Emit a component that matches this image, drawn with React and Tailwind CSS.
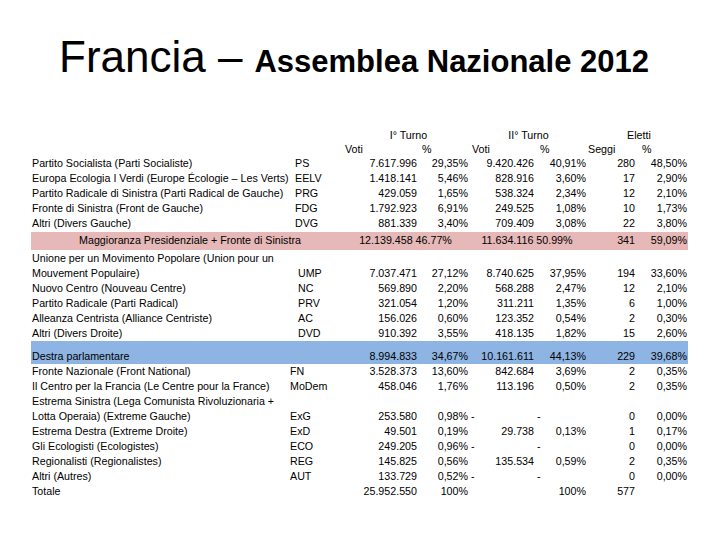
const num = "text-right";

const left = [
  ["Partito Socialista (Parti Socialiste)", "PS", "7.617.996", "29,35%", "9.420.426", "40,91%", "280", "48,50%"],
  ["Europa Ecologia I Verdi (Europe Écologie – Les Verts)", "EELV", "1.418.141", "5,46%", "828.916", "3,60%", "17", "2,90%"],
  ["Partito Radicale di Sinistra (Parti Radical de Gauche)", "PRG", "429.059", "1,65%", "538.324", "2,34%", "12", "2,10%"],
  ["Fronte di Sinistra (Front de Gauche)", "FDG", "1.792.923", "6,91%", "249.525", "1,08%", "10", "1,73%"],
  ["Altri (Divers Gauche)", "DVG", "881.339", "3,40%", "709.409", "3,08%", "22", "3,80%"],
];

const centre = [
  ["Unione per un Movimento Popolare (Union pour un"],
  ["Mouvement Populaire)", "UMP", "7.037.471", "27,12%", "8.740.625", "37,95%", "194", "33,60%"],
  ["Nuovo Centro (Nouveau Centre)", "NC", "569.890", "2,20%", "568.288", "2,47%", "12", "2,10%"],
  ["Partito Radicale (Parti Radical)", "PRV", "321.054", "1,20%", "311.211", "1,35%", "6", "1,00%"],
  ["Alleanza Centrista (Alliance Centriste)", "AC", "156.026", "0,60%", "123.352", "0,54%", "2", "0,30%"],
  ["Altri (Divers Droite)", "DVD", "910.392", "3,55%", "418.135", "1,82%", "15", "2,60%"],
];

const others = [
  ["Fronte Nazionale (Front National)", "FN", "3.528.373", "13,60%", "842.684", "3,69%", "2", "0,35%"],
  ["Il Centro per la Francia (Le Centre pour la France)", "MoDem", "458.046", "1,76%", "113.196", "0,50%", "2", "0,35%"],
  ["Estrema Sinistra (Lega Comunista Rivoluzionaria +"],
  ["Lotta Operaia) (Extreme Gauche)", "ExG", "253.580", "0,98%", "-", "-", "0", "0,00%"],
  ["Estrema Destra (Extreme Droite)", "ExD", "49.501", "0,19%", "29.738", "0,13%", "1", "0,17%"],
  ["Gli Ecologisti (Ecologistes)", "ECO", "249.205", "0,96%", "-", "-", "0", "0,00%"],
  ["Regionalisti (Regionalistes)", "REG", "145.825", "0,56%", "135.534", "0,59%", "2", "0,35%"],
  ["Altri (Autres)", "AUT", "133.729", "0,52%", "-", "-", "0", "0,00%"],
  ["Totale", "", "25.952.550", "100%", "", "100%", "577", ""],
];

function Row({ r, pad, className = "h-[15px]" }) {
  const [label, abbr = "", v1 = "", p1 = "", v2 = "", p2 = "", s = "", p3 = ""] = r;
  return (
    <div className={`flex items-center ${className}`}>
      <div className="w-[259px] pl-[1px] whitespace-nowrap">{label}</div>
      <div className={`w-[53px] ${pad}`}>{abbr}</div>
      <div className={`w-[75px] pr-[1px] ${num}`}>{v1}</div>
      <div className={`w-[50px] ${num}`}>{p1}</div>
      {v2 === "-" ? (
        <div className="w-[66px] pl-[3px]">-</div>
      ) : (
        <div className={`w-[66px] ${num}`}>{v2}</div>
      )}
      {p2 === "-" ? (
        <div className="w-[52px] pl-[3px]">-</div>
      ) : (
        <div className={`w-[52px] ${num}`}>{p2}</div>
      )}
      <div className={`w-[50px] pr-[1px] ${num}`}>{s}</div>
      <div className={`w-[52px] pr-[1px] ${num}`}>{p3}</div>
    </div>
  );
}

export default function App() {
  return (
    <div className="w-[720px] h-[540px] bg-white text-black font-['Liberation_Sans',Arial,sans-serif] overflow-hidden">
      <div className="h-[128px] pt-[35px] pl-[59px] flex items-baseline leading-none">
        <span className="text-[44px]">Francia –</span>
        <span className="text-[31px] font-bold ml-[12px]">Assemblea Nazionale 2012</span>
      </div>

      <div className="ml-[31px] w-[657px] text-[10.7px] leading-[15px]">
        <div className="flex h-[14px] items-center">
          <div className="w-[312px]" />
          <div className="w-[125px] pl-[6px] text-center">I° Turno</div>
          <div className="w-[118px] pl-[3px] text-center">II° Turno</div>
          <div className="w-[102px] pl-[4px] text-center">Eletti</div>
        </div>
        <div className="flex h-[14px] items-center">
          <div className="w-[312px]" />
          <div className="w-[75px] pl-[2px]">Voti</div>
          <div className="w-[50px] pl-[4px]">%</div>
          <div className="w-[66px] pl-[4px]">Voti</div>
          <div className="w-[52px] pl-[6px]">%</div>
          <div className="w-[50px] pl-[2px]">Seggi</div>
          <div className="w-[52px] pl-[6px]">%</div>
        </div>

        {left.map((r) => (
          <Row key={r[1]} r={r} pad="pl-[5px]" />
        ))}

        <div className="flex h-[18px] items-center bg-[#e6b8b7] mt-[0.5px]">
          <div className="w-[312px] text-center pl-[6px]">Maggioranza Presidenziale + Fronte di Sinistra</div>
          <div className="w-[125px] text-center">12.139.458 46.77%</div>
          <div className="w-[118px] text-center">11.634.116 50.99%</div>
          <div className={`w-[50px] pr-[1px] ${num}`}>341</div>
          <div className={`w-[52px] pr-[1px] ${num}`}>59,09%</div>
        </div>

        <div className="pt-[1px]">
          {centre.map((r) => (
            <Row key={r[0]} r={r} pad="pl-[8px]" />
          ))}
        </div>

        <Row
          r={["Destra parlamentare", "", "8.994.833", "34,67%", "10.161.611", "44,13%", "229", "39,68%"]}
          pad=""
          className="h-[23px] pt-[8px] bg-[#8db4e2]"
        />

        {others.map((r) => (
          <Row key={r[0]} r={r} pad="pl-0" />
        ))}
      </div>
    </div>
  );
}
